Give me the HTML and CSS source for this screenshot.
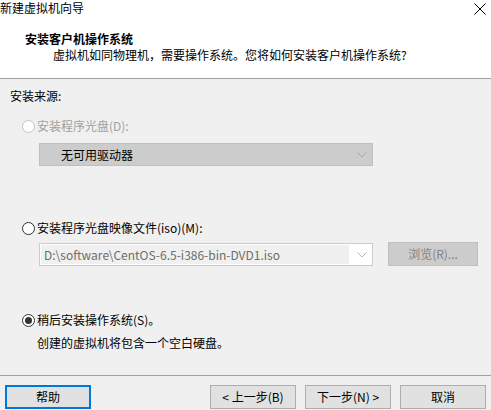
FILE: index.html
```html
<!DOCTYPE html>
<html lang="zh-CN">
<head>
    <meta charset="UTF-8">
    <title>新建虚拟机向导</title>
    <link rel="stylesheet" href="styles.css">
</head>
<body>
    <div class="wizard">
        <div class="top">
            <div class="titlebar">
                <span>新建虚拟机向导</span>
                <svg class="close" width="12" height="12" viewBox="0 0 12 12">
                    <path d="M0.5 0.5 L11.5 11.5 M11.5 0.5 L0.5 11.5" stroke="#000" stroke-width="1" fill="none"/>
                </svg>
            </div>
            <h1>安装客户机操作系统</h1>
            <p class="sub">虚拟机如同物理机，需要操作系统。您将如何安装客户机操作系统?</p>
        </div>

        <div class="content">
            <div class="label">安装来源:</div>

            <div class="radio disabled first">
                <span class="dot"></span>
                <span>安装程序光盘(D):</span>
            </div>
            <div class="combo solid">
                <span class="combo-text">无可用驱动器</span>
                <svg class="chev" width="10" height="6" viewBox="0 0 10 6">
                    <path d="M0.5 0.5 L5 5 L9.5 0.5" stroke="#a8a8a8" fill="none"/>
                </svg>
            </div>

            <div class="radio second">
                <span class="dot"></span>
                <span>安装程序光盘映像文件(iso)(M):</span>
            </div>
            <div class="iso-row">
                <div class="combo field">
                    <span class="combo-text">D:\software\CentOS-6.5-i386-bin-DVD1.iso</span>
                    <svg class="chev" width="10" height="6" viewBox="0 0 10 6">
                        <path d="M0.5 0.5 L5 5 L9.5 0.5" stroke="#b4b4b4" fill="none"/>
                    </svg>
                </div>
                <div class="browse">浏览(R)...</div>
            </div>

            <div class="radio third checked">
                <span class="dot"></span>
                <span>稍后安装操作系统(S)。</span>
            </div>
            <p class="note">创建的虚拟机将包含一个空白硬盘。</p>
        </div>

        <div class="buttons">
            <div class="btn focus">帮助</div>
            <div class="btn push">&lt; 上一步(B)</div>
            <div class="btn">下一步(N) &gt;</div>
            <div class="btn">取消</div>
        </div>
    </div>
</body>
</html>
```

FILE: styles.css
```css
* {
    margin: 0;
    padding: 0;
    box-sizing: border-box;
}
body {
    background: #f0f0f0;
    font-family: "Noto Sans CJK SC", "Microsoft YaHei", sans-serif;
    font-size: 12px;
    line-height: 16px;
    color: #000;
}
.wizard {
    width: 491px;
    height: 410px;
    overflow: hidden;
}
.top {
    height: 79px;
    background: #fff;
    border-bottom: 1px solid #a0a0a0;
}
.titlebar {
    display: flex;
    justify-content: space-between;
    align-items: flex-start;
    height: 16px;
}
.close {
    margin: 3px 5px 0 0;
}
.top h1 {
    margin-top: 15px;
    padding-left: 25px;
    font-size: 12px;
    font-weight: bold;
    line-height: 16px;
}
.sub {
    padding-left: 53px;
}
.content {
    height: 296px;
    padding: 9px 0 0 10px;
}
.radio {
    display: flex;
    align-items: center;
    gap: 2px;
    height: 16px;
    padding-left: 12px;
}
.radio .dot {
    display: flex;
    align-items: center;
    justify-content: center;
    width: 13px;
    height: 13px;
    border: 1px solid #333;
    border-radius: 50%;
    background: #fff;
}
.radio.disabled {
    color: #a0a0a0;
}
.radio.disabled .dot {
    border-color: #c4c4c4;
    background: #fff;
}
.radio.checked .dot::after {
    content: "";
    width: 7px;
    height: 7px;
    border-radius: 50%;
    background: #333;
}
.first {
    margin-top: 14px;
}
.second {
    margin-top: 54px;
}
.third {
    margin-top: 46px;
}
.combo {
    display: flex;
    align-items: center;
    justify-content: space-between;
    width: 334px;
    height: 23px;
    margin-left: 29px;
    padding-right: 5px;
}
.combo.solid {
    margin-top: 9px;
    background: #cccccc;
    border: 1px solid #bfbfbf;
    padding-left: 21px;
}
.iso-row {
    display: flex;
    align-items: flex-start;
    gap: 15px;
    margin-top: 6px;
}
.combo.field {
    margin-top: 1px;
    background: #fff;
    border: 1px solid #cccccc;
    padding: 1px 5px 1px 1px;
}
.combo.field .combo-text {
    flex: 1;
    height: 19px;
    line-height: 19px;
    margin-right: 8px;
    padding-left: 3px;
    background: #f0f0f0;
    color: #6d6d6d;
}
.browse {
    width: 90px;
    height: 24px;
    line-height: 22px;
    text-align: center;
    background: #cccccc;
    border: 1px solid #bfbfbf;
    color: #838383;
}
.note {
    margin-top: 7px;
    padding-left: 27px;
}
.buttons {
    display: flex;
    gap: 9px;
    padding: 9px 5px 0;
    border-top: 1px solid #a0a0a0;
}
.btn {
    width: 86px;
    height: 24px;
    line-height: 22px;
    text-align: center;
    background: #e1e1e1;
    border: 1px solid #adadad;
}
.btn.focus {
    border: 2px solid #0078d7;
    line-height: 20px;
}
.btn.push {
    margin-left: auto;
}
```
